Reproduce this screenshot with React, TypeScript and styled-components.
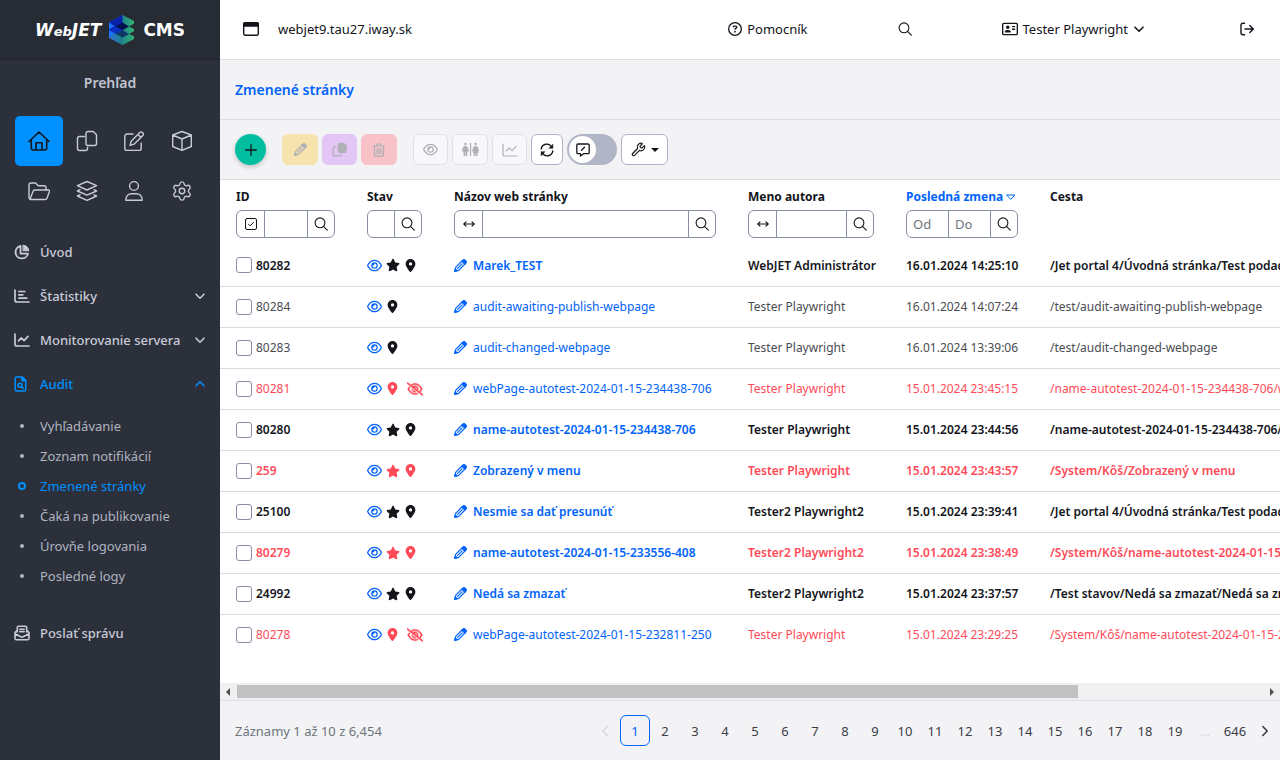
import React from "react";
import styled, { createGlobalStyle, css } from "styled-components";
import { Settings, Wrench } from "lucide-react";
import {
  FaRegEye,
  FaRegEyeSlash,
  FaStar,
  FaLocationDot,
  FaRestroom,
  FaRegAddressCard,
  FaRegCircleQuestion,
} from "react-icons/fa6";

const GlobalStyle = createGlobalStyle`
  *, *::before, *::after { box-sizing: border-box; }
  body {
    margin: 0;
    background: #fff;
    color: #13151b;
    font-family: "Noto Sans", "Liberation Sans", sans-serif;
    font-size: 12px;
  }
  button, input { font: inherit; color: inherit; margin: 0; }
  button { cursor: pointer; background: none; border: 0; padding: 0; }
  a { text-decoration: none; color: inherit; }
  ul { list-style: none; margin: 0; padding: 0; }
  svg { display: block; flex: none; }
`;

/* ---------- icons ---------- */

type GlyphProps = {
  box: string;
  w: number;
  h: number;
  weight?: number;
  children: React.ReactNode;
};

const Glyph = ({ box, w, h, weight = 1.4, children }: GlyphProps) => (
  <svg
    width={w}
    height={h}
    viewBox={box}
    fill="none"
    stroke="currentColor"
    strokeWidth={weight}
    strokeLinecap="round"
    strokeLinejoin="round"
    aria-hidden="true"
  >
    {children}
  </svg>
);

const Tile = ({ children }: { children: React.ReactNode }) => (
  <Glyph box="0 0 22 22" w={22} h={22}>
    {children}
  </Glyph>
);

const HomeIcon = () => (
  <Glyph box="0 0 22 22" w={22} h={22} weight={1.6}>
    <path d="M1 11.500 11 2l10 9.500M3.300 9.800V18a2 2 0 0 0 2 2h11.400a2 2 0 0 0 2-2V9.800M8 20v-7.200h6V20" />
  </Glyph>
);
const CopyIcon = () => (
  <Tile>
    <path d="M8.500 6.500h-5a2 2 0 0 0-2 2v10a2 2 0 0 0 2 2h6a2 2 0 0 0 2-2v-1.200" />
    <path d="M12 1.500h5.200l3.300 3.200v8.800a2 2 0 0 1-2 2H12a2 2 0 0 1-2-2v-10a2 2 0 0 1 2-2z" />
  </Tile>
);
const EditIcon = () => (
  <Tile>
    <path d="M10 4H4a2.200 2.200 0 0 0-2.200 2.200v12A2.200 2.200 0 0 0 4 20.400h12a2.200 2.200 0 0 0 2.200-2.200V13" />
    <path d="m8.200 11.300 8.600-8.700a1.900 1.900 0 0 1 2.700 0l.3.3a1.900 1.900 0 0 1 0 2.700L11.100 14.200l-4 1.200zM15 4.500l3 3" />
  </Tile>
);
const BoxIcon = () => (
  <Tile>
    <path d="M11 1.500 20.300 5v11.500L11 20.300l-9.300-3.800V5zM1.700 5 11 9l9.300-4M11 9v11.300" />
  </Tile>
);
const FolderIcon = () => (
  <Tile>
    <path d="M3 19.500a2 2 0 0 1-2-2V5a2 2 0 0 1 2-2h4.500l2.800 2.800H16a2 2 0 0 1 2 2V10" />
    <path d="M2.200 18.800 5 11.500A2 2 0 0 1 6.800 10h13.700c.8 0 1.200.6 1 1.300l-2.500 6.900a2 2 0 0 1-1.900 1.300H3" />
  </Tile>
);
const LayersIcon = () => (
  <Tile>
    <path d="m11 1.500 9.600 4.200L11 10 1.400 5.700zM4 9.700 1.400 11l9.600 4.200 9.600-4.200L18 9.700M4 14.800 1.400 16l9.600 4.300 9.600-4.300-2.600-1.200" />
  </Tile>
);
const UserIcon = () => (
  <Tile>
    <circle cx="11" cy="6" r="4.400" />
    <path d="M2.800 20.300c0-4.400 2.700-6.600 5.900-6.600h4.600c3.200 0 5.900 2.200 5.900 6.600z" />
  </Tile>
);

const PieIcon = () => (
  <Glyph box="0 0 16 16" w={16} h={16} weight={1.800}>
    <path d="M6.500 2a6.300 6.300 0 1 0 7.500 7.600H6.500z" />
    <path d="M9.300 1.200a5.800 5.800 0 0 1 5.500 5.600H9.300z" fill="currentColor" strokeWidth="1" />
  </Glyph>
);
const BarsIcon = () => (
  <Glyph box="0 0 16 16" w={16} h={16} weight={1.700}>
    <path d="M1 2v10a2 2 0 0 0 2 2h12M4.800 3.500h6M4.800 6.800h4M4.800 10.100h8" />
  </Glyph>
);
const LineIcon = ({ weight = 1.700 }: { weight?: number }) => (
  <Glyph box="0 0 16 16" w={16} h={16} weight={weight}>
    <path d="M1 2v10a2 2 0 0 0 2 2h12M4.500 8.800l2.800-2.900 2.800 2.700L14 4.400" />
  </Glyph>
);
const FileSearchIcon = () => (
  <Glyph box="0 0 16 16" w={16} h={16} weight={1.500}>
    <path d="M2.700 1h5.500l3.500 3.500V13.500a1.500 1.500 0 0 1-1.500 1.500h-7.500a1.500 1.500 0 0 1-1.500-1.500v-11a1.500 1.500 0 0 1 1.500-1.500z" />
    <path d="M8 1v3.700h3.700z" fill="currentColor" />
    <circle cx="6" cy="9.200" r="2" />
    <path d="m7.600 10.800 1.600 1.600" />
  </Glyph>
);
const MailIcon = () => (
  <Glyph box="0 0 16 16" w={16} h={16} weight={1.600}>
    <path d="M3.300 7V2.500a1.200 1.200 0 0 1 1.200-1.200h7a1.200 1.200 0 0 1 1.200 1.200V7M5.800 4.200h4.400M5.800 6.600h4.400M3.300 5.500 1 7.300v6a1.400 1.400 0 0 0 1.400 1.400h11.200a1.400 1.400 0 0 0 1.400-1.400v-6l-2.300-1.800M1 8.800l5.800 3a2.600 2.600 0 0 0 2.400 0l5.800-3" />
  </Glyph>
);
const Chevron = ({ dir = "down" }: { dir?: "down" | "up" | "left" | "right" }) => {
  const shapes = {
    down: "m2 4.200 4 4 4-4",
    up: "m2 7.800 4-4 4 4",
    left: "M8.200 1.500 3.800 6l4.400 4.500",
    right: "M3.800 1.500 8.200 6l-4.400 4.500",
  };
  return (
    <Glyph box="0 0 12 12" w={12} h={12} weight={1.600}>
      <path d={shapes[dir]} />
    </Glyph>
  );
};
const WindowIcon = () => (
  <Glyph box="0 0 16 14" w={16} h={14} weight={1.400}>
    <rect x="0.700" y="0.700" width="14.600" height="12.600" rx="1.500" />
    <path d="M1 1h14v3H1z" fill="currentColor" />
  </Glyph>
);
const SearchIcon = () => (
  <Glyph box="0 0 14 14" w={14} h={14} weight={1.100}>
    <circle cx="6" cy="5.800" r="4.900" />
    <path d="m9.500 9.400 3.800 3.800" />
  </Glyph>
);
const LogoutIcon = () => (
  <Glyph box="0 0 14 14" w={14} h={14} weight={1.400}>
    <path d="M4.500 1.200H3A2 2 0 0 0 1 3.200v7.600a2 2 0 0 0 2 2h1.500M5 7h8.200M9.800 3.500 13.300 7l-3.500 3.500" />
  </Glyph>
);
const PencilIcon = () => (
  <Glyph box="0 0 14 14" w={13} h={13} weight={1.300}>
    <path d="m1.800 9 6.800-6.800 3.200 3.200L5 12.200l-4.200 1.100zM3.900 10.100l4.800-4.800" />
    <path d="m8.600 2.200 1.200-1.200a1.300 1.300 0 0 1 1.900 0l1.300 1.300a1.300 1.300 0 0 1 0 1.900l-1.200 1.200zM.8 13.200l.6-2.400 1.800 1.800z" fill="currentColor" />
  </Glyph>
);
const DuplicateIcon = () => (
  <Glyph box="0 0 16 16" w={15} h={15} weight={1.400}>
    <path d="M4.500 5.500H2.800A1.500 1.500 0 0 0 1.300 7v6.200a1.500 1.500 0 0 0 1.500 1.500h5.400a1.500 1.500 0 0 0 1.500-1.500v-.2" />
    <path d="M8.400 1.500h4.100L15 4v5.500a1.500 1.500 0 0 1-1.500 1.500H8.400a1.500 1.500 0 0 1-1.500-1.500V3a1.500 1.500 0 0 1 1.500-1.500z" fill="currentColor" />
  </Glyph>
);
const TrashIcon = () => (
  <Glyph box="0 0 14 14" w={14} h={14} weight={1.200}>
    <path d="M1.300 3h11.400M4.500 2.800l.8-1.800h3.400l.8 1.800M2.500 3v8.700a1.500 1.500 0 0 0 1.500 1.500h6a1.500 1.500 0 0 0 1.500-1.500V3M5 5.500v5M7 5.500v5M9 5.500v5" />
  </Glyph>
);
const PlusIcon = () => (
  <Glyph box="0 0 12 12" w={12} h={12} weight={1.300}>
    <path d="M6 .7v10.600M.7 6h10.600" />
  </Glyph>
);
const RefreshIcon = () => (
  <Glyph box="0 0 14 14" w={14} h={14} weight={1.400}>
    <path d="M1.200 6A5.600 5.600 0 0 1 11.600 4M12.800 8A5.600 5.600 0 0 1 2.400 10" />
    <path d="M12.900 1.500v3.800H9.200zM1.100 12.500V8.700h3.700z" fill="currentColor" strokeWidth="0.500" />
  </Glyph>
);
const NoteIcon = () => (
  <Glyph box="0 0 14 14" w={14} h={14} weight={1.300}>
    <path d="M2 1h10a1.200 1.200 0 0 1 1.200 1.200v7.300A1.200 1.200 0 0 1 12 10.700H7.500L4.500 13v-2.300H2A1.200 1.200 0 0 1 .8 9.500V2.200A1.200 1.200 0 0 1 2 1zM5.500 7.300l3-3" />
  </Glyph>
);
const CheckSquareIcon = () => (
  <Glyph box="0 0 12 12" w={12} h={12} weight={1}>
    <rect x="0.500" y="0.500" width="11" height="11" rx="1.500" />
    <path d="m3.500 6.200 1.700 1.700 3.300-3.500" />
  </Glyph>
);
const ArrowsIcon = () => (
  <Glyph box="0 0 12 8" w={12} h={8} weight={1.100}>
    <path d="M1 4h10M3 1.800.8 4 3 6.200M9 1.800 11.200 4 9 6.200" />
  </Glyph>
);
const SortIcon = () => (
  <Glyph box="0 0 10 8" w={10} h={8} weight={1}>
    <path d="M1 2h8L5 6z" />
  </Glyph>
);
const CaretIcon = ({ dir }: { dir: "down" | "left" | "right" }) => {
  const shapes = { down: "0,2 8,2 4,6", left: "6,0 6,8 2,4", right: "2,0 2,8 6,4" };
  return (
    <svg width="8" height="8" viewBox="0 0 8 8" fill="currentColor" aria-hidden="true">
      <polygon points={shapes[dir]} />
    </svg>
  );
};

const LogoMark = () => (
  <svg width="26" height="30" viewBox="0 0 26 30" aria-hidden="true">
    <defs>
      <linearGradient id="ribbon" x1="0" x2="1">
        <stop offset="0" stopColor="#2f6fd6" />
        <stop offset="0.500" stopColor="#1f7f8c" />
        <stop offset="1" stopColor="#2fb573" />
      </linearGradient>
    </defs>
    <path
      d="M13.500 0 25 6v2.700l-5 2.800 5 2.500v2.200l-5 2.800 5 2.300V24l-11.500 6L0 23V7z"
      fill="url(#ribbon)"
    />
    <path d="M13.500 0v15L7 18.500 0 15V7z" fill="#0a22a8" />
    <path d="M0 7.500 5.500 11 0 14.500zM0 15l5.500 3.500L0 22z" fill="#1b74ff" />
    <path d="m6.500 11.500 7-4 6.500 4-6.500 3.800z" fill="#04124f" />
    <path d="m6.500 18.800 7-3.500 6.500 3.700-6.500 3.500z" fill="#0a3564" />
    <path d="m0 15.200 6.500-3.700 7 3.800-7 3.500z" fill="#0b2fc0" />
  </svg>
);

/* ---------- frame ---------- */

const Frame = styled.div`
  display: flex;
  min-height: 100vh;
`;

const Sidebar = styled.aside`
  flex: 0 0 220px;
  background: #2c303b;
  color: #c7cbd8;
`;

const Brand = styled.a`
  display: flex;
  align-items: center;
  justify-content: center;
  gap: 8px;
  height: 60px;
  background: #272b34;
  border-bottom: 1px solid #22252e;
  color: #fff;
  font: 700 17px "DejaVu Sans", sans-serif;
`;

const BrandName = styled.span`
  font-style: italic;
  small { font-size: 13px; }
`;

const SideTitle = styled.h2`
  margin: 0;
  padding-top: 12px;
  font-size: 14px;
  line-height: 22px;
  font-weight: 600;
  text-align: center;
  color: #bfc3d0;
`;

const Tiles = styled.nav`
  display: grid;
  grid-template-columns: 48px repeat(3, 1fr);
  padding: 22px 14px 14px 15px;
`;

const TileButton = styled.button<{ $active?: boolean }>`
  display: flex;
  align-items: center;
  justify-content: center;
  height: 50px;
  border-radius: 5px;
  color: ${(p) => (p.$active ? "#13151b" : "#c7cbd8")};
  background: ${(p) => (p.$active ? "#0090ff" : "transparent")};
`;

const MenuLink = styled.a<{ $active?: boolean }>`
  display: flex;
  align-items: center;
  gap: 10px;
  height: 44px;
  padding: 0 14px;
  font-size: 13px;
  font-weight: 500;
  color: ${(p) => (p.$active ? "#0090ff" : "#c7cbd8")};
`;

const MenuLabel = styled.span`
  flex: 1;
`;

const SubMenu = styled.ul`
  padding: 5px 0 20px;
`;

const SubLink = styled.a<{ $active?: boolean }>`
  display: flex;
  align-items: center;
  height: 30px;
  padding-left: 14px;
  gap: 10px;
  font-size: 13px;
  color: ${(p) => (p.$active ? "#0090ff" : "#b0b4c1")};
`;

const Bullet = styled.span<{ $active?: boolean }>`
  display: flex;
  justify-content: center;
  width: 16px;
  &::before {
    content: "";
    border-radius: 50%;
    ${(p) =>
      p.$active
        ? css`width: 8px; height: 8px; border: 2px solid currentColor;`
        : css`width: 4px; height: 4px; background: currentColor;`}
  }
`;

const Main = styled.main`
  flex: 1;
  min-width: 0;
  display: flex;
  flex-direction: column;
`;

const TopBar = styled.header`
  display: flex;
  align-items: center;
  gap: 90px;
  height: 60px;
  padding: 0 26px 2px 23px;
  border-bottom: 1px solid #dcdde3;
  font-size: 13px;
`;

const Site = styled.div`
  display: flex;
  align-items: center;
  gap: 19px;
  margin-right: auto;
`;

const TopButton = styled.button`
  display: flex;
  align-items: center;
  gap: 5px;
  &:last-child { padding-left: 5px; }
`;

const TitleBar = styled.div`
  display: flex;
  align-items: center;
  height: 60px;
  padding: 0 15px;
  background: #f3f3f6;
  border-bottom: 1px solid #dcdde3;
  h1 {
    margin: 0;
    font-size: 14px;
    font-weight: 600;
    color: #0063fb;
  }
`;

const Toolbar = styled.div`
  display: flex;
  align-items: center;
  gap: 16px;
  height: 60px;
  padding: 0 15px;
  background: #f3f3f6;
  border-bottom: 1px solid #dcdde3;
`;

const ToolGroup = styled.div`
  display: flex;
  gap: 4px;
`;

const AddButton = styled.button`
  display: flex;
  align-items: center;
  justify-content: center;
  width: 31px;
  height: 31px;
  border-radius: 50%;
  background: #00be9f;
  box-shadow: 0 2px 5px rgba(0, 0, 0, 0.2);
`;

const ToolButton = styled.button<{ $tone?: string; $width?: number }>`
  display: flex;
  align-items: center;
  justify-content: center;
  gap: 5px;
  width: ${(p) => p.$width ?? 36}px;
  height: 31px;
  border-radius: 6px;
  color: #13151b;
  background: ${(p) => p.$tone ?? "#fff"};
  border: 1px solid ${(p) => p.$tone ?? "#adb3c5"};
  &:disabled {
    cursor: default;
    color: #afb0b6;
    background: ${(p) => p.$tone ?? "#f8f8fa"};
    border-color: ${(p) => p.$tone ?? "#e0e1e8"};
  }
`;

const Toggle = styled.button`
  display: flex;
  width: 50px;
  height: 31px;
  padding: 2px;
  border-radius: 16px;
  background: #b1b6c6;
`;

const Knob = styled.span`
  display: flex;
  align-items: center;
  justify-content: center;
  width: 27px;
  height: 27px;
  border-radius: 50%;
  background: #fff;
`;

/* ---------- table ---------- */

const TableArea = styled.div`
  flex: 1;
  overflow-x: auto;
  scrollbar-width: none;
`;

const Table = styled.table`
  width: 1295px;
  table-layout: fixed;
  border-collapse: collapse;
  white-space: nowrap;
`;

const HeadCell = styled.th<{ $sorted?: boolean }>`
  height: 65px;
  padding: 7px 16px;
  text-align: left;
  vertical-align: top;
  font-size: 12px;
  line-height: 20px;
  font-weight: 700;
  color: ${(p) => (p.$sorted ? "#0063fb" : "#13151b")};
`;

const HeadLabel = styled.span`
  display: flex;
  align-items: center;
  gap: 3px;
  height: 20px;
`;

const Filter = styled.div`
  display: flex;
  height: 28px;
  margin-top: 3px;
  border: 1px solid #868ea8;
  border-radius: 6px;
  background: #fff;
  color: #13151b;
  overflow: hidden;
`;

const FilterButton = styled.button`
  display: flex;
  align-items: center;
  justify-content: center;
  flex: 0 0 27px;
  border-left: 1px solid #868ea8;
  &:first-child { border-left: 0; }
`;

const FilterInput = styled.input`
  flex: 1;
  width: 0;
  min-width: 0;
  padding: 0 6px;
  border: 0;
  border-left: 1px solid #868ea8;
  background: none;
  outline: 0;
  font-size: 13px;
  font-weight: 400;
  &:first-child { border-left: 0; }
  &::placeholder { color: #6c757d; opacity: 1; }
`;

const Row = styled.tr<{ $bold?: boolean; $removed?: boolean }>`
  border-bottom: 1px solid #d9dbe5;
  font-weight: ${(p) => (p.$bold ? 600 : 400)};
  color: ${(p) => (p.$removed ? "#ff4b58" : p.$bold ? "#13151b" : "#4a4c52")};
  &:last-child { border-bottom: 0; }
`;

const Cell = styled.td`
  height: 41px;
  padding: 0 16px;
`;

const CellInner = styled.div`
  display: flex;
  align-items: center;
  gap: 4px;
`;

const PickLabel = styled.label`
  display: flex;
  align-items: center;
  gap: 4px;
`;

const Pick = styled.input`
  appearance: none;
  width: 16px;
  height: 16px;
  border: 1px solid #868ea8;
  border-radius: 3px;
  background: #fff;
`;

const EyeLink = styled.a`
  color: #0063fb;
`;

const Marks = styled.span<{ $removed?: boolean }>`
  display: flex;
  align-items: center;
  gap: 4px;
  color: ${(p) => (p.$removed ? "#ff4b58" : "#13151b")};
`;

const HiddenMark = styled.span`
  margin-left: 4px;
`;

const PageLink = styled.a`
  display: flex;
  align-items: center;
  gap: 6px;
  color: #0063fb;
`;

/* ---------- scroll bar and footer ---------- */

const ScrollBar = styled.div`
  display: flex;
  align-items: center;
  height: 17px;
  padding: 0 4px;
  gap: 5px;
  background: #f0f0f0;
  color: #505050;
`;

const ScrollTrack = styled.div`
  flex: 1;
`;

const ScrollThumb = styled.div`
  width: 82%;
  height: 13px;
  background: #c1c1c1;
`;

const Footer = styled.footer`
  display: flex;
  align-items: center;
  justify-content: space-between;
  height: 60px;
  padding-left: 15px;
  background: #f3f3f6;
  border-top: 1px solid #dcdde6;
  font-size: 13px;
  color: #6c757d;
`;

const Pager = styled.ul`
  display: flex;
`;

const PageButton = styled.button<{ $active?: boolean; $muted?: boolean }>`
  display: flex;
  align-items: center;
  justify-content: center;
  width: 30px;
  height: 31px;
  border-radius: 6px;
  border: 1px solid ${(p) => (p.$active ? "#0063fb" : "transparent")};
  color: ${(p) => (p.$active ? "#0063fb" : p.$muted ? "#d6d8e0" : "#3b3d45")};
`;

/* ---------- data ---------- */

type Page = {
  id: string;
  title: string;
  author: string;
  date: string;
  path: string;
  bold?: boolean;
  removed?: boolean;
};

const pages: Page[] = [
  { id: "80282", title: "Marek_TEST", author: "WebJET Administrátor", date: "16.01.2024 14:25:10", path: "/Jet portal 4/Úvodná stránka/Test podadresár/Marek_TEST", bold: true },
  { id: "80284", title: "audit-awaiting-publish-webpage", author: "Tester Playwright", date: "16.01.2024 14:07:24", path: "/test/audit-awaiting-publish-webpage" },
  { id: "80283", title: "audit-changed-webpage", author: "Tester Playwright", date: "16.01.2024 13:39:06", path: "/test/audit-changed-webpage" },
  { id: "80281", title: "webPage-autotest-2024-01-15-234438-706", author: "Tester Playwright", date: "15.01.2024 23:45:15", path: "/name-autotest-2024-01-15-234438-706/webPage-autotest", removed: true },
  { id: "80280", title: "name-autotest-2024-01-15-234438-706", author: "Tester Playwright", date: "15.01.2024 23:44:56", path: "/name-autotest-2024-01-15-234438-706/name-autotest", bold: true },
  { id: "259", title: "Zobrazený v menu", author: "Tester Playwright", date: "15.01.2024 23:43:57", path: "/System/Kôš/Zobrazený v menu", bold: true, removed: true },
  { id: "25100", title: "Nesmie sa dať presunúť", author: "Tester2 Playwright2", date: "15.01.2024 23:39:41", path: "/Jet portal 4/Úvodná stránka/Test podadresár/Nesmie sa dať", bold: true },
  { id: "80279", title: "name-autotest-2024-01-15-233556-408", author: "Tester2 Playwright2", date: "15.01.2024 23:38:49", path: "/System/Kôš/name-autotest-2024-01-15-233556-408", bold: true, removed: true },
  { id: "24992", title: "Nedá sa zmazať", author: "Tester2 Playwright2", date: "15.01.2024 23:37:57", path: "/Test stavov/Nedá sa zmazať/Nedá sa zmazať", bold: true },
  { id: "80278", title: "webPage-autotest-2024-01-15-232811-250", author: "Tester Playwright", date: "15.01.2024 23:29:25", path: "/System/Kôš/name-autotest-2024-01-15-232811-250", removed: true },
];

const tiles = [
  { name: "Prehľad", icon: <HomeIcon /> },
  { name: "Web stránky", icon: <CopyIcon /> },
  { name: "Príspevky", icon: <EditIcon /> },
  { name: "Aplikácie", icon: <BoxIcon /> },
  { name: "Súbory", icon: <FolderIcon /> },
  { name: "Šablóny", icon: <LayersIcon /> },
  { name: "Používatelia", icon: <UserIcon /> },
  { name: "Nastavenia", icon: <Settings size={22} strokeWidth={1.500} /> },
];

const auditLinks = [
  "Vyhľadávanie",
  "Zoznam notifikácií",
  "Zmenené stránky",
  "Čaká na publikovanie",
  "Úrovňe logovania",
  "Posledné logy",
];

const columnWidths = [131, 87, 294, 158, 144, 481];

const PageRow = ({ page }: { page: Page }) => (
  <Row $bold={page.bold} $removed={page.removed}>
    <Cell>
      <PickLabel>
        <Pick type="checkbox" />
        {page.id}
      </PickLabel>
    </Cell>
    <Cell>
      <CellInner>
        <EyeLink href="#" aria-label="Zobraziť">
          <FaRegEye size={15} />
        </EyeLink>
        <Marks $removed={page.removed}>
          {page.bold && <FaStar size={14} />}
          <FaLocationDot size={13} />
          {page.removed && !page.bold && (
            <HiddenMark>
              <FaRegEyeSlash size={16} strokeWidth={24} />
            </HiddenMark>
          )}
        </Marks>
      </CellInner>
    </Cell>
    <Cell>
      <PageLink href="#">
        <PencilIcon />
        {page.title}
      </PageLink>
    </Cell>
    <Cell>{page.author}</Cell>
    <Cell>{page.date}</Cell>
    <Cell>{page.path}</Cell>
  </Row>
);

const SearchButton = () => (
  <FilterButton aria-label="Hľadať">
    <SearchIcon />
  </FilterButton>
);

const App = () => (
  <>
    <GlobalStyle />
    <Frame>
      <Sidebar>
        <Brand href="#">
          <BrandName>
            W<small>eb</small>JET
          </BrandName>
          <LogoMark />
          <span>CMS</span>
        </Brand>
        <SideTitle>Prehľad</SideTitle>
        <Tiles>
          {tiles.map((tile, i) => (
            <TileButton key={tile.name} aria-label={tile.name} $active={i === 0}>
              {tile.icon}
            </TileButton>
          ))}
        </Tiles>
        <nav>
          <MenuLink href="#">
            <PieIcon />
            <MenuLabel>Úvod</MenuLabel>
          </MenuLink>
          <MenuLink href="#">
            <BarsIcon />
            <MenuLabel>Štatistiky</MenuLabel>
            <Chevron />
          </MenuLink>
          <MenuLink href="#">
            <LineIcon />
            <MenuLabel>Monitorovanie servera</MenuLabel>
            <Chevron />
          </MenuLink>
          <MenuLink href="#" $active>
            <FileSearchIcon />
            <MenuLabel>Audit</MenuLabel>
            <Chevron dir="up" />
          </MenuLink>
          <SubMenu>
            {auditLinks.map((label, i) => (
              <li key={label}>
                <SubLink href="#" $active={i === 2}>
                  <Bullet $active={i === 2} />
                  {label}
                </SubLink>
              </li>
            ))}
          </SubMenu>
          <MenuLink href="#">
            <MailIcon />
            <MenuLabel>Poslať správu</MenuLabel>
          </MenuLink>
        </nav>
      </Sidebar>

      <Main>
        <TopBar>
          <Site>
            <WindowIcon />
            webjet9.tau27.iway.sk
          </Site>
          <TopButton>
            <FaRegCircleQuestion size={14} />
            Pomocník
          </TopButton>
          <TopButton aria-label="Hľadať">
            <SearchIcon />
          </TopButton>
          <TopButton>
            <FaRegAddressCard size={16} />
            Tester Playwright
            <Chevron />
          </TopButton>
          <TopButton aria-label="Odhlásiť">
            <LogoutIcon />
          </TopButton>
        </TopBar>
        <TitleBar>
          <h1>Zmenené stránky</h1>
        </TitleBar>
        <Toolbar>
          <AddButton aria-label="Pridať">
            <PlusIcon />
          </AddButton>
          <ToolGroup>
            <ToolButton $tone="#f7e3ad" disabled aria-label="Editovať">
              <PencilIcon />
            </ToolButton>
            <ToolButton $tone="#e3c6f5" $width={35} disabled aria-label="Duplikovať">
              <DuplicateIcon />
            </ToolButton>
            <ToolButton $tone="#f9c1c8" disabled aria-label="Vymazať">
              <TrashIcon />
            </ToolButton>
          </ToolGroup>
          <ToolGroup>
            <ToolButton $width={35} disabled aria-label="Zobraziť stránku">
              <FaRegEye size={15} />
            </ToolButton>
            <ToolButton disabled aria-label="Porovnať">
              <FaRestroom size={17} />
            </ToolButton>
            <ToolButton $width={35} disabled aria-label="Štatistika">
              <LineIcon weight={1.200} />
            </ToolButton>
            <ToolButton $width={32} aria-label="Obnoviť">
              <RefreshIcon />
            </ToolButton>
            <Toggle role="switch" aria-checked="false" aria-label="Úprava bunky">
              <Knob>
                <NoteIcon />
              </Knob>
            </Toggle>
            <ToolButton $width={47} aria-label="Nastavenia tabuľky">
              <Wrench size={15} strokeWidth={1.900} />
              <CaretIcon dir="down" />
            </ToolButton>
          </ToolGroup>
        </Toolbar>

        <TableArea>
          <Table>
            <colgroup>
              {columnWidths.map((width) => (
                <col key={width} width={width} />
              ))}
            </colgroup>
            <thead>
              <tr>
                <HeadCell>
                  <HeadLabel>ID</HeadLabel>
                  <Filter>
                    <FilterButton aria-label="Označiť všetky">
                      <CheckSquareIcon />
                    </FilterButton>
                    <FilterInput aria-label="ID" />
                    <SearchButton />
                  </Filter>
                </HeadCell>
                <HeadCell>
                  <HeadLabel>Stav</HeadLabel>
                  <Filter>
                    <FilterInput aria-label="Stav" />
                    <SearchButton />
                  </Filter>
                </HeadCell>
                <HeadCell>
                  <HeadLabel>Názov web stránky</HeadLabel>
                  <Filter>
                    <FilterButton aria-label="Obsahuje">
                      <ArrowsIcon />
                    </FilterButton>
                    <FilterInput aria-label="Názov web stránky" />
                    <SearchButton />
                  </Filter>
                </HeadCell>
                <HeadCell>
                  <HeadLabel>Meno autora</HeadLabel>
                  <Filter>
                    <FilterButton aria-label="Obsahuje">
                      <ArrowsIcon />
                    </FilterButton>
                    <FilterInput aria-label="Meno autora" />
                    <SearchButton />
                  </Filter>
                </HeadCell>
                <HeadCell $sorted>
                  <HeadLabel>
                    Posledná zmena
                    <SortIcon />
                  </HeadLabel>
                  <Filter>
                    <FilterInput aria-label="Posledná zmena od" placeholder="Od" />
                    <FilterInput aria-label="Posledná zmena do" placeholder="Do" />
                    <SearchButton />
                  </Filter>
                </HeadCell>
                <HeadCell>
                  <HeadLabel>Cesta</HeadLabel>
                </HeadCell>
              </tr>
            </thead>
            <tbody>
              {pages.map((page) => (
                <PageRow key={page.id} page={page} />
              ))}
            </tbody>
          </Table>
        </TableArea>
        <ScrollBar>
          <CaretIcon dir="left" />
          <ScrollTrack>
            <ScrollThumb />
          </ScrollTrack>
          <CaretIcon dir="right" />
        </ScrollBar>
        <Footer>
          <span>Záznamy 1 až 10 z 6,454</span>
          <Pager>
            <li>
              <PageButton $muted aria-label="Predchádzajúca">
                <Chevron dir="left" />
              </PageButton>
            </li>
            {Array.from({ length: 19 }, (_, i) => (
              <li key={i}>
                <PageButton $active={i === 0}>{i + 1}</PageButton>
              </li>
            ))}
            <li>
              <PageButton $muted>…</PageButton>
            </li>
            <li>
              <PageButton>646</PageButton>
            </li>
            <li>
              <PageButton aria-label="Nasledujúca">
                <Chevron dir="right" />
              </PageButton>
            </li>
          </Pager>
        </Footer>
      </Main>
    </Frame>
  </>
);

export default App;
